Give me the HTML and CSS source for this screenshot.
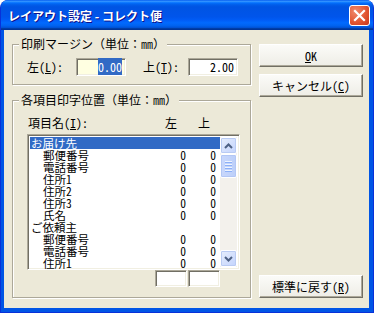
FILE: index.html
```html
<!DOCTYPE html>
<html lang="ja">

<head>
  <meta charset="UTF-8">
  <title>レイアウト設定 - コレクト便</title>
  <link rel="stylesheet" href="styles.css">
</head>

<body>
  <div class="window">
    <div class="titlebar">
      <span class="title">レイアウト設定 - コレクト便</span>
      <span class="close-btn">
        <svg width="13" height="13" viewBox="0 0 13 13">
          <path d="M2 2 L11 11 M11 2 L2 11" stroke="#fff" stroke-width="2.2" stroke-linecap="square" />
        </svg>
      </span>
    </div>

    <div class="client">
      <div class="left-col">
        <div class="group margin-group">
          <span class="group-title">印刷マージン（単位：㎜）</span>
          <div class="margin-row">
            <span class="m-label">左(<u>L</u>):</span>
            <div class="textbox yellow"><span class="sel">0.00</span></div>
            <span class="m-label second">上(<u>T</u>):</span>
            <div class="textbox">2.00</div>
          </div>
        </div>

        <div class="group items-group">
          <span class="group-title">各項目印字位置（単位：㎜）</span>
          <div class="list-head">
            <span class="head-name">項目名(<u>I</u>):</span>
            <span class="head-col">左</span>
            <span class="head-col">上</span>
          </div>
          <div class="listbox">
            <div class="rows">
              <div class="row selected"><span class="name">お届け先</span><span class="num"></span><span class="num"></span></div>
              <div class="row sub"><span class="name">郵便番号</span><span class="num">0</span><span class="num">0</span></div>
              <div class="row sub"><span class="name">電話番号</span><span class="num">0</span><span class="num">0</span></div>
              <div class="row sub"><span class="name">住所1</span><span class="num">0</span><span class="num">0</span></div>
              <div class="row sub"><span class="name">住所2</span><span class="num">0</span><span class="num">0</span></div>
              <div class="row sub"><span class="name">住所3</span><span class="num">0</span><span class="num">0</span></div>
              <div class="row sub"><span class="name">氏名</span><span class="num">0</span><span class="num">0</span></div>
              <div class="row"><span class="name">ご依頼主</span><span class="num"></span><span class="num"></span></div>
              <div class="row sub"><span class="name">郵便番号</span><span class="num">0</span><span class="num">0</span></div>
              <div class="row sub"><span class="name">電話番号</span><span class="num">0</span><span class="num">0</span></div>
              <div class="row sub"><span class="name">住所1</span><span class="num">0</span><span class="num">0</span></div>
            </div>
            <div class="scrollbar">
              <div class="sb-btn">
                <svg width="9" height="6" viewBox="0 0 9 6"><path d="M1 5 L4.5 1.5 L8 5" fill="none" stroke="#4d6185" stroke-width="2" /></svg>
              </div>
              <div class="sb-thumb">
                <span class="grip"></span><span class="grip"></span><span class="grip"></span><span class="grip"></span>
              </div>
              <div class="sb-track"></div>
              <div class="sb-btn">
                <svg width="9" height="6" viewBox="0 0 9 6"><path d="M1 1 L4.5 4.5 L8 1" fill="none" stroke="#4d6185" stroke-width="2" /></svg>
              </div>
            </div>
          </div>
          <div class="edit-row">
            <div class="small-box"></div>
            <div class="small-box"></div>
          </div>
        </div>
      </div>

      <div class="right-col">
        <button class="btn"><u>O</u>K</button>
        <button class="btn">キャンセル(<u>C</u>)</button>
        <button class="btn reset">標準に戻す(<u>R</u>)</button>
      </div>
    </div>
  </div>
</body>

</html>
```

FILE: styles.css
```css
body {
  margin: 0;
  background: #ffffff;
  font-family: "Noto Sans Mono CJK JP", "Noto Sans CJK JP", sans-serif;
  font-size: 12px;
  color: #000;
}

.window {
  width: 374px;
  height: 313px;
  box-sizing: border-box;
  display: flex;
  flex-direction: column;
  background: #0055e5;
  border-radius: 8px 8px 0 0;
  border: 1px solid #0831d9;
  border-top: none;
}

.titlebar {
  height: 30px;
  flex: none;
  display: flex;
  align-items: center;
  justify-content: space-between;
  padding: 0 3px 0 7px;
  border-radius: 7px 7px 0 0;
  background: linear-gradient(to bottom, #0058ee 0%, #3593ff 4%, #288eff 6%, #127dff 8%, #036ffc 10%, #0262ee 14%, #0057e5 20%, #0054e3 24%, #0055eb 56%, #005bf5 66%, #026afe 76%, #0062ef 86%, #0052d6 92%, #0040ab 94%, #003092 100%);
}

.title {
  color: #fff;
  font-weight: bold;
  font-size: 12px;
  text-shadow: 1px 1px #0f1089;
  font-family: "Noto Sans CJK JP", sans-serif;
}

.close-btn {
  width: 19px;
  height: 19px;
  border: 1px solid #fff;
  border-radius: 3px;
  display: flex;
  align-items: center;
  justify-content: center;
  background: radial-gradient(circle at 30% 30%, #f08a6c, #e0532f 60%, #c6371c);
}

.client {
  flex: 1;
  margin: 0 4px 4px 3px;
  background: #ece9d8;
  display: flex;
  gap: 8px;
  padding: 14px 6px 10px 8px;
}

.left-col {
  width: 239px;
  display: flex;
  flex-direction: column;
}

.group {
  position: relative;
  border: 1px solid #aca899;
  box-shadow: 1px 1px 0 #fff, inset 1px 1px 0 #fff;
}

.group-title {
  position: absolute;
  top: -8px;
  left: 6px;
  padding: 0 2px;
  line-height: 14px;
  background: #ece9d8;
}

.margin-group {
  height: 41px;
  box-sizing: border-box;
  padding: 13px 0 0 14px;
}

.margin-row {
  display: flex;
  align-items: center;
}

.m-label {
  width: 49px;
  line-height: 18px;
}

.m-label.second {
  width: 45px;
  margin-left: 17px;
}

.textbox {
  width: 50px;
  height: 18px;
  box-sizing: border-box;
  border: 1px solid;
  border-color: #aca899 #fff #fff #aca899;
  box-shadow: inset 1px 1px 0 #716f64, inset -1px -1px 0 #f1efe2;
  background: #fff;
  text-align: right;
  padding: 0 3px 0 0;
  line-height: 16px;
}

.textbox.yellow {
  background: #ffffe1;
}

.sel {
  background: #316ac5;
  color: #fff;
}

.items-group {
  margin-top: 15px;
  height: 198px;
  box-sizing: border-box;
  padding: 15px 10px 0 14px;
}

.list-head {
  display: flex;
  line-height: 14px;
  height: 18px;
}

.head-name {
  flex: 1;
  padding-left: 1px;
}

.head-col {
  width: 32px;
  text-align: center;
  margin-right: 1px;
}

.head-col:last-child {
  margin-right: 20px;
}

.listbox {
  height: 136px;
  box-sizing: border-box;
  display: flex;
  border: 1px solid;
  border-color: #aca899 #fff #fff #aca899;
  box-shadow: inset 1px 1px 0 #716f64, inset -1px -1px 0 #f1efe2;
  background: #fff;
  padding: 2px;
}

.rows {
  flex: 1;
  font-size: 11.5px;
}

.row {
  display: flex;
  height: 12px;
  line-height: 12px;
  padding-right: 4px;
}

.row .name {
  flex: 1;
  padding-left: 1px;
}

.row.sub .name {
  padding-left: 13px;
}

.row.selected {
  background: #316ac5;
  color: #fff;
}

.num {
  width: 30px;
  text-align: right;
}

.scrollbar {
  width: 17px;
  display: flex;
  flex-direction: column;
  background: #f3f1ec;
}

.sb-btn {
  height: 17px;
  box-sizing: border-box;
  border: 1px solid #fff;
  border-radius: 2px;
  background: linear-gradient(to bottom right, #e6eefc, #c3d3fd);
  box-shadow: inset 0 0 0 1px #b9cbf3;
  display: flex;
  align-items: center;
  justify-content: center;
}

.sb-thumb {
  height: 24px;
  box-sizing: border-box;
  border: 1px solid #fff;
  border-radius: 2px;
  background: linear-gradient(to right, #c9d8fc, #bccff9);
  box-shadow: inset 0 0 0 1px #b3c7f5;
  display: flex;
  flex-direction: column;
  align-items: center;
  justify-content: center;
  gap: 1px;
}

.grip {
  width: 7px;
  height: 1px;
  background: #eef4fe;
  border-bottom: 1px solid #8cb0f8;
}

.sb-track {
  flex: 1;
}

.edit-row {
  display: flex;
  gap: 1px;
  margin-left: 128px;
}

.small-box {
  width: 32px;
  height: 17px;
  box-sizing: border-box;
  border: 1px solid;
  border-color: #aca899 #fff #fff #aca899;
  box-shadow: inset 1px 1px 0 #716f64, inset -1px -1px 0 #f1efe2;
  background: #fff;
}

.right-col {
  width: 104px;
  display: flex;
  flex-direction: column;
  gap: 7px;
}

.btn {
  height: 23px;
  padding: 0;
  font-family: inherit;
  font-size: 12px;
  color: #000;
  border: 1px solid;
  border-color: #fff #716f64 #716f64 #fff;
  box-shadow: inset -1px -1px 0 #aca899;
  background: linear-gradient(to bottom, #fbfbf8, #eeede6);
}

.btn.reset {
  margin-top: auto;
}
```
